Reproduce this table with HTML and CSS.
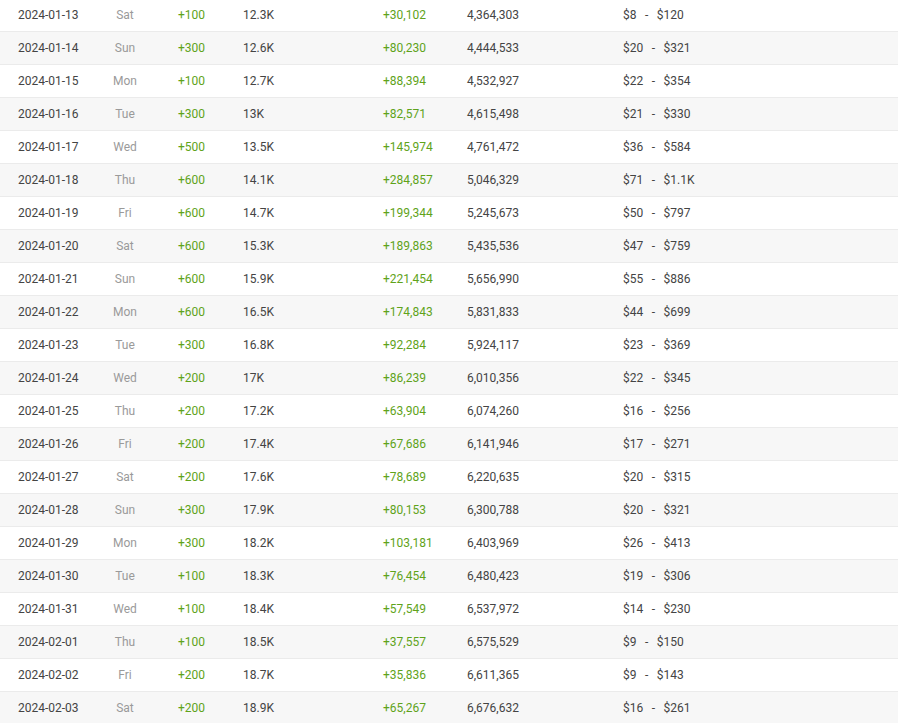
FILE: index.html
```html
<!DOCTYPE html>
<html>
<head>
<meta charset="utf-8">
<link rel="stylesheet" href="styles.css">
</head>
<body>
<div class="table">
<div class="row"><div class="c date">2024-01-13</div><div class="c day">Sat</div><div class="c gain">+100</div><div class="c">12.3K</div><div class="c gain">+30,102</div><div class="c">4,364,303</div><div class="c"><span>$8</span><span class="dash">-</span><span>$120</span></div></div>
<div class="row"><div class="c date">2024-01-14</div><div class="c day">Sun</div><div class="c gain">+300</div><div class="c">12.6K</div><div class="c gain">+80,230</div><div class="c">4,444,533</div><div class="c"><span>$20</span><span class="dash">-</span><span>$321</span></div></div>
<div class="row"><div class="c date">2024-01-15</div><div class="c day">Mon</div><div class="c gain">+100</div><div class="c">12.7K</div><div class="c gain">+88,394</div><div class="c">4,532,927</div><div class="c"><span>$22</span><span class="dash">-</span><span>$354</span></div></div>
<div class="row"><div class="c date">2024-01-16</div><div class="c day">Tue</div><div class="c gain">+300</div><div class="c">13K</div><div class="c gain">+82,571</div><div class="c">4,615,498</div><div class="c"><span>$21</span><span class="dash">-</span><span>$330</span></div></div>
<div class="row"><div class="c date">2024-01-17</div><div class="c day">Wed</div><div class="c gain">+500</div><div class="c">13.5K</div><div class="c gain">+145,974</div><div class="c">4,761,472</div><div class="c"><span>$36</span><span class="dash">-</span><span>$584</span></div></div>
<div class="row"><div class="c date">2024-01-18</div><div class="c day">Thu</div><div class="c gain">+600</div><div class="c">14.1K</div><div class="c gain">+284,857</div><div class="c">5,046,329</div><div class="c"><span>$71</span><span class="dash">-</span><span>$1.1K</span></div></div>
<div class="row"><div class="c date">2024-01-19</div><div class="c day">Fri</div><div class="c gain">+600</div><div class="c">14.7K</div><div class="c gain">+199,344</div><div class="c">5,245,673</div><div class="c"><span>$50</span><span class="dash">-</span><span>$797</span></div></div>
<div class="row"><div class="c date">2024-01-20</div><div class="c day">Sat</div><div class="c gain">+600</div><div class="c">15.3K</div><div class="c gain">+189,863</div><div class="c">5,435,536</div><div class="c"><span>$47</span><span class="dash">-</span><span>$759</span></div></div>
<div class="row"><div class="c date">2024-01-21</div><div class="c day">Sun</div><div class="c gain">+600</div><div class="c">15.9K</div><div class="c gain">+221,454</div><div class="c">5,656,990</div><div class="c"><span>$55</span><span class="dash">-</span><span>$886</span></div></div>
<div class="row"><div class="c date">2024-01-22</div><div class="c day">Mon</div><div class="c gain">+600</div><div class="c">16.5K</div><div class="c gain">+174,843</div><div class="c">5,831,833</div><div class="c"><span>$44</span><span class="dash">-</span><span>$699</span></div></div>
<div class="row"><div class="c date">2024-01-23</div><div class="c day">Tue</div><div class="c gain">+300</div><div class="c">16.8K</div><div class="c gain">+92,284</div><div class="c">5,924,117</div><div class="c"><span>$23</span><span class="dash">-</span><span>$369</span></div></div>
<div class="row"><div class="c date">2024-01-24</div><div class="c day">Wed</div><div class="c gain">+200</div><div class="c">17K</div><div class="c gain">+86,239</div><div class="c">6,010,356</div><div class="c"><span>$22</span><span class="dash">-</span><span>$345</span></div></div>
<div class="row"><div class="c date">2024-01-25</div><div class="c day">Thu</div><div class="c gain">+200</div><div class="c">17.2K</div><div class="c gain">+63,904</div><div class="c">6,074,260</div><div class="c"><span>$16</span><span class="dash">-</span><span>$256</span></div></div>
<div class="row"><div class="c date">2024-01-26</div><div class="c day">Fri</div><div class="c gain">+200</div><div class="c">17.4K</div><div class="c gain">+67,686</div><div class="c">6,141,946</div><div class="c"><span>$17</span><span class="dash">-</span><span>$271</span></div></div>
<div class="row"><div class="c date">2024-01-27</div><div class="c day">Sat</div><div class="c gain">+200</div><div class="c">17.6K</div><div class="c gain">+78,689</div><div class="c">6,220,635</div><div class="c"><span>$20</span><span class="dash">-</span><span>$315</span></div></div>
<div class="row"><div class="c date">2024-01-28</div><div class="c day">Sun</div><div class="c gain">+300</div><div class="c">17.9K</div><div class="c gain">+80,153</div><div class="c">6,300,788</div><div class="c"><span>$20</span><span class="dash">-</span><span>$321</span></div></div>
<div class="row"><div class="c date">2024-01-29</div><div class="c day">Mon</div><div class="c gain">+300</div><div class="c">18.2K</div><div class="c gain">+103,181</div><div class="c">6,403,969</div><div class="c"><span>$26</span><span class="dash">-</span><span>$413</span></div></div>
<div class="row"><div class="c date">2024-01-30</div><div class="c day">Tue</div><div class="c gain">+100</div><div class="c">18.3K</div><div class="c gain">+76,454</div><div class="c">6,480,423</div><div class="c"><span>$19</span><span class="dash">-</span><span>$306</span></div></div>
<div class="row"><div class="c date">2024-01-31</div><div class="c day">Wed</div><div class="c gain">+100</div><div class="c">18.4K</div><div class="c gain">+57,549</div><div class="c">6,537,972</div><div class="c"><span>$14</span><span class="dash">-</span><span>$230</span></div></div>
<div class="row"><div class="c date">2024-02-01</div><div class="c day">Thu</div><div class="c gain">+100</div><div class="c">18.5K</div><div class="c gain">+37,557</div><div class="c">6,575,529</div><div class="c"><span>$9</span><span class="dash">-</span><span>$150</span></div></div>
<div class="row"><div class="c date">2024-02-02</div><div class="c day">Fri</div><div class="c gain">+200</div><div class="c">18.7K</div><div class="c gain">+35,836</div><div class="c">6,611,365</div><div class="c"><span>$9</span><span class="dash">-</span><span>$143</span></div></div>
<div class="row"><div class="c date">2024-02-03</div><div class="c day">Sat</div><div class="c gain">+200</div><div class="c">18.9K</div><div class="c gain">+65,267</div><div class="c">6,676,632</div><div class="c"><span>$16</span><span class="dash">-</span><span>$261</span></div></div>
</div>
</body>
</html>
```
FILE: styles.css
```css
html, body {
  margin: 0;
  padding: 0;
  background: #ffffff;
}
body {
  font-family: Roboto, "Liberation Sans", Arial, sans-serif;
  font-size: 12px;
  color: #444444;
  overflow: hidden;
}
.table {
  margin-top: -1px;
}
.row {
  display: grid;
  grid-template-columns: 98px 54px 91px 140px 84px 156px 1fr;
  height: 32px;
  align-items: center;
  border-bottom: 1px solid #ebebeb;
  background: #ffffff;
}
.row:nth-child(even) {
  background: #f7f7f7;
}
.c {
  white-space: nowrap;
  line-height: 16px;
}
.date {
  padding-left: 18px;
}
.day {
  text-align: center;
  color: #9a9a9a;
}
.gain {
  color: #5fa31a;
}
.row .c:nth-child(3) {
  padding-left: 26px;
}
.dash {
  padding: 0 8.5px;
}
```
